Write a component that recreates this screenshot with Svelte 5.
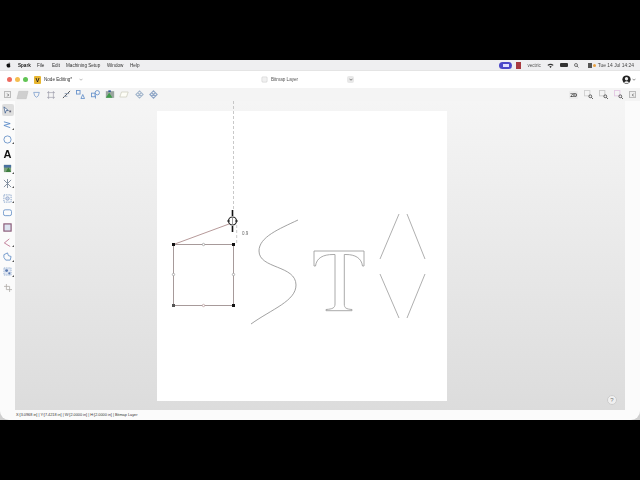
<script>
  const menus = [
    { label: 'Spark', bold: true, w: 19 },
    { label: 'File', w: 15 },
    { label: 'Edit', w: 14 },
    { label: 'Machining Setup', w: 41 },
    { label: 'Window', w: 23 },
    { label: 'Help', w: 12 }
  ];
  const zoomIcons = ['#d0d0d0', '#c8c8c8', '#e4c8e4'];
</script>

<div class="screen">
  <div class="window">
    <div class="menubar">
      <svg class="apple" viewBox="0 0 10 12" width="5" height="6"><path d="M7 1 C6 1 5.300 1.900 5.300 3 C6.400 3 7 2 7 1 Z M5 3.500 C4 3 1 3 1 6.500 C1 9 3 11.500 4 11 C4.700 10.700 5.300 10.700 6 11 C7 11.500 8.500 9.500 9 8 C7.500 7.300 7.300 5 8.800 4 C7.800 2.900 6 3 5 3.500 Z" fill="#111"/></svg>
      {#each menus as m}
        <span class="menu" class:bold={m.bold} style="width:{m.w}px">{m.label}</span>
      {/each}
      <div class="status">
        <span class="pill"><i></i></span>
        <span class="redbook"></span>
        <span class="vectric">vectric</span>
        <svg class="wifi" viewBox="0 0 10 8" width="7" height="5"><path d="M0 3 Q5 -1 10 3 L8.500 4.500 Q5 2 1.500 4.500 Z M3 5.500 Q5 4 7 5.500 L5 8 Z" fill="#333"/></svg>
        <span class="battery"></span>
        <svg class="search" viewBox="0 0 10 10" width="5" height="5"><circle cx="4" cy="4" r="3" fill="none" stroke="#444" stroke-width="1.400"/><path d="M6 6 L9 9" stroke="#444" stroke-width="1.400"/></svg>
        <span class="ctrl"><b></b><em></em></span>
        <span class="clock">Tue 14 Jul 14:24</span>
      </div>
    </div>

    <div class="titlebar">
      <div class="lights"><i class="r"></i><i class="y"></i><i class="g"></i></div>
      <span class="vlogo">V</span>
      <span class="mode">Node Editing*</span>
      <svg class="chev" viewBox="0 0 8 5" width="4" height="3"><path d="M1 1 L4 4 L7 1" fill="none" stroke="#777" stroke-width="1"/></svg>
      <div class="layer">
        <svg viewBox="0 0 8 8" width="7" height="7"><rect x="1" y="1" width="6" height="6" rx="1" fill="#f0f0f0" stroke="#ccc" stroke-width=".6"/></svg>
        <span>Bitmap Layer</span>
      </div>
      <span class="dropbtn"><svg viewBox="0 0 8 5" width="4" height="3"><path d="M1 1 L4 4 L7 1" fill="none" stroke="#444" stroke-width="1.200"/></svg></span>
      <div class="user">
        <svg viewBox="0 0 12 12" width="9" height="9"><circle cx="6" cy="6" r="5.500" fill="#222"/><circle cx="6" cy="5" r="2.200" fill="#eee"/><path d="M2.500 10 Q6 6.500 9.500 10 Q6 12 2.500 10 Z" fill="#eee"/></svg>
        <svg viewBox="0 0 8 5" width="4" height="3"><path d="M1 1 L4 4 L7 1" fill="none" stroke="#444" stroke-width="1.200"/></svg>
      </div>
    </div>

    <div class="toolbar">
      <span class="slot first"><span class="sq"><svg viewBox="0 0 6 6" width="4" height="4"><path d="M2 1 L4 3 L2 5" fill="none" stroke="#333" stroke-width="1"/></svg></span></span>
      <span class="slot"><svg viewBox="0 0 14 10" width="13" height="10"><path d="M3 1 H13 L11 9 H1 Z" fill="#cfcfcf" stroke="#bbb" stroke-width=".5"/></svg></span>
      <span class="slot"><svg viewBox="0 0 10 10" width="7" height="7"><path d="M1 2 H9 L7.500 7 L5 9 L2.500 7 Z" fill="none" stroke="#6f94c8" stroke-width="1"/></svg></span>
      <span class="slot"><svg viewBox="0 0 10 10" width="8" height="8"><path d="M2 0 V10 M8 0 V10 M0 2 H10 M0 8 H10" stroke="#9a9aa8" stroke-width=".8"/></svg></span>
      <span class="slot"><svg viewBox="0 0 10 10" width="9" height="9"><path d="M1 9 L9 1" stroke="#555" stroke-width="1.100"/><path d="M3 4 H8 M2 7 H6" stroke="#8a9ab0" stroke-width="1" fill="none"/></svg></span>
      <span class="slot"><svg viewBox="0 0 10 10" width="9" height="9"><rect x="0.500" y="0.500" width="4" height="4" fill="none" stroke="#6a94cc"/><path d="M7.500 5 L9.500 9.500 H5.500 Z" fill="none" stroke="#6a94cc"/></svg></span>
      <span class="slot"><svg viewBox="0 0 10 10" width="9" height="9"><circle cx="7" cy="3" r="2.400" fill="none" stroke="#6a94cc"/><rect x="0.500" y="3.500" width="4" height="4" fill="none" stroke="#6a94cc"/><path d="M5 6 V9.500" stroke="#6a94cc"/></svg></span>
      <span class="slot"><svg viewBox="0 0 12 10" width="10" height="9"><rect x="1" y="1" width="10" height="8" fill="#9aa5a0"/><path d="M1 9 L5 3 L9 9 Z" fill="#3f9a4a"/><rect x="4" y="0" width="3" height="2" fill="#3a5a9a"/></svg></span>
      <span class="slot"><svg viewBox="0 0 12 10" width="10" height="9"><path d="M3 2 H11 L9 8 H1 Z" fill="#fdfdf6" stroke="#c8c8b8" stroke-width=".8" stroke-linejoin="round"/></svg></span>
      <span class="slot"><svg viewBox="0 0 10 10" width="9" height="9"><path d="M5 1 L9 5 L5 9 L1 5 Z M3 3 L7 7 M7 3 L3 7" fill="none" stroke="#a3b6cc" stroke-width="1.200"/></svg></span>
      <span class="slot"><svg viewBox="0 0 10 10" width="9" height="9"><path d="M5 1 L9 5 L5 9 L1 5 Z M3 3 L7 7 M7 3 L3 7" fill="none" stroke="#8fa6c6" stroke-width="1.300"/></svg></span>
      <div class="tright">
        <span class="btn2d">2D</span>
        {#each zoomIcons as c}
          <svg viewBox="0 0 10 10" width="9" height="9"><rect x=".5" y=".5" width="6" height="6" fill="none" stroke={c}/><circle cx="7" cy="7" r="1.600" fill="none" stroke="#555"/><path d="M8 8 L10 10" stroke="#555"/></svg>
        {/each}
        <span class="sq"><svg viewBox="0 0 6 6" width="4" height="4"><path d="M4 1 L2 3 L4 5" fill="none" stroke="#333" stroke-width="1"/></svg></span>
      </div>
    </div>

    <div class="main">
      <div class="side">
        <span class="tool sel"><svg viewBox="0 0 10 10" width="9" height="9"><path d="M1 1 L6 5 H3.500 L2.500 8 Z" fill="#fff" stroke="#3a5a8a" stroke-width=".8"/><rect x="7" y="5" width="2" height="2" fill="#667"/></svg></span>
        <span class="tool more"><svg viewBox="0 0 10 10" width="9" height="9"><path d="M1 2 L8 4 L1 6 L8 8.500" fill="none" stroke="#4a7fc4" stroke-width=".9"/></svg></span>
        <span class="tool more"><svg viewBox="0 0 10 10" width="9" height="9"><circle cx="5" cy="5" r="4" fill="none" stroke="#5b8ac4" stroke-width=".9"/></svg></span>
        <span class="tool letter">A</span>
        <span class="tool more"><svg viewBox="0 0 10 10" width="9" height="9"><rect x="1" y="1" width="8" height="8" fill="#7aa07a"/><path d="M1 1 H9 V4 H1 Z" fill="#4a70a0"/><path d="M3 9 L6 4 L9 9 Z" fill="#3d7d3d"/></svg></span>
        <span class="tool more"><svg viewBox="0 0 10 10" width="9" height="9"><path d="M1 1 L9 9 M9 1 L1 9 M5 0 V10" stroke="#7a8898" stroke-width="1"/></svg></span>
        <span class="tool more"><svg viewBox="0 0 10 10" width="9" height="9"><rect x="1" y="1" width="8" height="8" fill="none" stroke="#7a9ac4" stroke-dasharray="1.500 1"/><circle cx="5" cy="5" r="2" fill="#cfd8ea" stroke="#6a88b8" stroke-width=".6"/></svg></span>
        <span class="tool"><svg viewBox="0 0 10 10" width="9" height="9"><rect x=".5" y="2" width="9" height="6.500" rx="2" fill="none" stroke="#5b8ac4" stroke-width=".9"/></svg></span>
        <span class="tool"><svg viewBox="0 0 10 10" width="9" height="9"><rect x="1" y="1" width="8" height="8" fill="#dde4f0" stroke="#8a5a78" stroke-width="1.300"/></svg></span>
        <span class="tool more"><svg viewBox="0 0 10 10" width="9" height="9"><path d="M7 1 L1.500 5.500 L8 9.500" fill="none" stroke="#b86a8a" stroke-width=".9"/></svg></span>
        <span class="tool more"><svg viewBox="0 0 10 10" width="9" height="9"><path d="M1 3 L5 1 L6 4 L9 5 L8 9 L3 9 L1 6 Z" fill="none" stroke="#5b8ac4" stroke-width=".9"/></svg></span>
        <span class="tool more"><svg viewBox="0 0 10 10" width="9" height="9"><rect x="1" y="1" width="8" height="8" fill="#dfe6f2" stroke="#7a9ac4" stroke-width=".7" stroke-dasharray="1.500 1"/><circle cx="4" cy="4" r="1.600" fill="#5b7ab0"/><circle cx="7" cy="7" r="1.200" fill="#5b7ab0"/></svg></span>
        <span class="tool last"><svg viewBox="0 0 10 10" width="8" height="8"><path d="M3 0 V7 H10 M0 3 H7 V10" fill="none" stroke="#b0aca8" stroke-width="1"/></svg></span>
      </div>
      <div class="canvas">
        <div class="sheet">
          <svg class="art" viewBox="0 0 290 290" width="290" height="290">
            <!-- square with node handles -->
            <path d="M16.500 133.500 H76.500 V194.500 H16.500 Z" fill="none" stroke="#a79a9a" stroke-width="1"/>
            <path d="M16.500 133.500 L72 113" fill="none" stroke="#b79a9a" stroke-width="1"/>
            <path d="M76.500 -10 V99 M79.700 114 V133" fill="none" stroke="#bbb" stroke-width=".8" stroke-dasharray="3 2"/>
            <rect x="15" y="132" width="3" height="3" fill="#111"/>
            <rect x="75" y="132" width="3" height="3" fill="#111"/>
            <rect x="75" y="193" width="3" height="3" fill="#111"/>
            <rect x="15" y="193" width="3" height="3" fill="#555"/>
            <circle cx="46.500" cy="133.500" r="1.200" fill="#fff" stroke="#888" stroke-width=".6"/>
            <circle cx="76.500" cy="163.500" r="1.200" fill="#fff" stroke="#888" stroke-width=".6"/>
            <circle cx="46.500" cy="194.500" r="1.200" fill="#fff" stroke="#a88" stroke-width=".6"/>
            <circle cx="16.500" cy="163.500" r="1.200" fill="#fff" stroke="#888" stroke-width=".6"/>
            <!-- cursor -->
            <circle cx="75.500" cy="110" r="4" fill="#fff" stroke="#222" stroke-width="1.200"/>
            <path d="M75.500 99 V105 M75.500 115 V121" stroke="#111" stroke-width="1.600"/>
            <path d="M70 110 H73 M78 110 H81" stroke="#333" stroke-width="1"/>
            <path d="M75.500 107 V113" stroke="#555" stroke-width=".6"/>
            <text x="85" y="124" class="dim">0.9</text>
            <!-- S curve -->
            <path d="M141 109 C122 118 102 126 102 140 C102 158 139 154 139 174 C139 190 115 198 94 213" fill="none" stroke="#8a8a8a" stroke-width=".8"/>
            <!-- serif T -->
            <path d="M157 140 H207 V155 H205.500 C204.500 147 198 143.500 189 143.500 H187.300 V193 C187.300 197 189 198 195 198.500 V199.700 H169 V198.500 C175.500 198 178 197 178 193 V143.500 H176 C166 143.500 159.500 147 158.500 155 H157 Z" fill="none" stroke="#a0a0a0" stroke-width=".9"/>
            <!-- diamond parts -->
            <path d="M242 103 L223 148 M250 103 L268 148 M223 163 L242 207 M268 163 L250 207" fill="none" stroke="#9a9a9a" stroke-width=".8"/>
          </svg>
        </div>
        <span class="help">?</span>
      </div>
      <div class="rightpad"></div>
    </div>

    <div class="statusbar">X:[3.0968 in] | Y:[7.4218 in] | W:[2.0000 in] | H:[2.0000 in] | Bitmap Layer</div>
  </div>
</div>

<style>
  :global(body) {
    margin: 0;
    background: #000;
  }
  .screen {
    width: 640px;
    height: 360px;
    margin: 60px 0;
    background: #cfcfcf;
    font-family: "Liberation Sans", Arial, sans-serif;
    color: #333;
    overflow: hidden;
  }
  .window {
    height: 100%;
    display: flex;
    flex-direction: column;
    border-radius: 0 0 9px 9px;
    overflow: hidden;
    filter: blur(0.3px);
  }
  .menubar {
    height: 10px;
    background: #efeff1;
    display: flex;
    align-items: center;
    padding-left: 6px;
    font-size: 4.6px;
    white-space: nowrap;
  }
  .apple { margin-right: 7px; }
  .menu { display: block; color: #333; }
  .menu.bold { font-weight: 700; color: #222; }
  .status {
    margin-left: auto;
    display: flex;
    align-items: center;
    padding-right: 6px;
  }
  .pill {
    width: 13px;
    height: 7px;
    border-radius: 4px;
    background: #4a48c8;
    display: flex;
    align-items: center;
    justify-content: center;
  }
  .pill i { width: 6px; height: 3px; background: #dfe0ff; }
  .redbook { width: 5px; height: 7px; background: #a83a40; margin-left: 4px; }
  .vectric { color: #555; margin-left: 6px; }
  .wifi { margin-left: 6px; }
  .battery { width: 8px; height: 4px; background: #333; border-radius: 1px; margin-left: 6px; }
  .search { margin-left: 6px; }
  .ctrl { display: flex; gap: 1px; align-items: center; margin-left: 9px; }
  .ctrl b { width: 4px; height: 5px; background: #555; }
  .ctrl em { width: 3px; height: 3px; border-radius: 50%; background: #e8a040; }
  .clock { color: #444; margin-left: 2px; font-size: 4.9px; }

  .titlebar {
    height: 18px;
    background: #fff;
    border-top: 1px solid #e4e4e4;
    box-sizing: border-box;
    display: flex;
    align-items: center;
    padding-left: 7px;
    font-size: 4.6px;
  }
  .lights { display: flex; gap: 3px; margin-right: 6px; }
  .lights i { width: 5px; height: 5px; border-radius: 50%; }
  .r { background: #ee6a5f; }
  .y { background: #f5bd4f; }
  .g { background: #61c454; }
  .vlogo {
    width: 7px;
    height: 8px;
    border-radius: 1px;
    background: #e8b630;
    color: #222;
    font-size: 6px;
    font-weight: 700;
    text-align: center;
    line-height: 8px;
    margin-right: 3px;
  }
  .mode { color: #333; width: 32px; white-space: nowrap; }
  .chev { margin-left: 3px; }
  .layer {
    display: flex;
    align-items: center;
    gap: 3px;
    margin-left: 178px;
    width: 86px;
    color: #555;
  }
  .dropbtn {
    width: 7px;
    height: 7px;
    border-radius: 2px;
    background: #e8e8e8;
    display: flex;
    align-items: center;
    justify-content: center;
  }
  .user {
    margin-left: auto;
    padding-right: 4px;
    display: flex;
    align-items: center;
    gap: 1px;
  }

  .toolbar {
    height: 13px;
    background: #f4f4f4;
    display: flex;
    align-items: center;
  }
  .slot {
    width: 14.6px;
    flex: none;
    display: flex;
    align-items: center;
    justify-content: center;
  }
  .slot.first { width: 15px; }
  .sq {
    width: 5px;
    height: 5px;
    border: 1px solid #bbb;
    background: #eee;
    display: flex;
    align-items: center;
    justify-content: center;
  }
  .tright {
    margin-left: auto;
    padding-right: 4px;
    display: flex;
    align-items: center;
    gap: 6px;
  }
  .btn2d {
    font-family: "Liberation Serif", serif;
    font-size: 5.5px;
    font-weight: 700;
    background: #ececec;
    border-radius: 1px;
    width: 9px;
    height: 8px;
    text-align: center;
    line-height: 8px;
    color: #222;
  }

  .main {
    flex: 1;
    display: flex;
    min-height: 0;
  }
  .side {
    width: 15px;
    background: #fbfbfb;
    display: flex;
    flex-direction: column;
    align-items: center;
    padding-top: 3px;
    gap: 2.7px;
  }
  .tool {
    width: 12px;
    height: 12px;
    display: flex;
    align-items: center;
    justify-content: center;
    flex: none;
    position: relative;
  }
  .tool.more::after {
    content: "";
    position: absolute;
    right: 0;
    bottom: 1px;
    border-style: solid;
    border-width: 0 0 2px 2px;
    border-color: transparent transparent #555 transparent;
  }
  .tool.sel { background: #dedede; border-radius: 2px; }
  .tool.letter {
    font-size: 11px;
    font-weight: 700;
    color: #111;
  }
  .tool.last { margin-top: 2px; }
  .canvas {
    flex: 1;
    position: relative;
    background: linear-gradient(#f5f5f5, #dcdcdc);
    padding: 10px 0 0 142px;
    box-sizing: border-box;
  }
  .sheet {
    width: 290px;
    height: 290px;
    background: #fff;
  }
  .art {
    display: block;
    overflow: visible;
  }
  .dim {
    font-size: 4.500px;
    fill: #666;
    font-family: "Liberation Sans", Arial, sans-serif;
  }
  .help {
    position: absolute;
    right: 8px;
    bottom: 5px;
    width: 8px;
    height: 8px;
    border-radius: 50%;
    background: #f0f0f0;
    border: 1px solid #ccc;
    font-size: 6px;
    line-height: 8px;
    text-align: center;
    color: #777;
  }
  .rightpad { width: 15px; background: #fbfbfb; }
  .statusbar {
    height: 10px;
    background: #fbfbfb;
    padding-left: 16px;
    font-size: 3.82px;
    line-height: 10px;
    color: #333;
    white-space: nowrap;
  }
</style>
